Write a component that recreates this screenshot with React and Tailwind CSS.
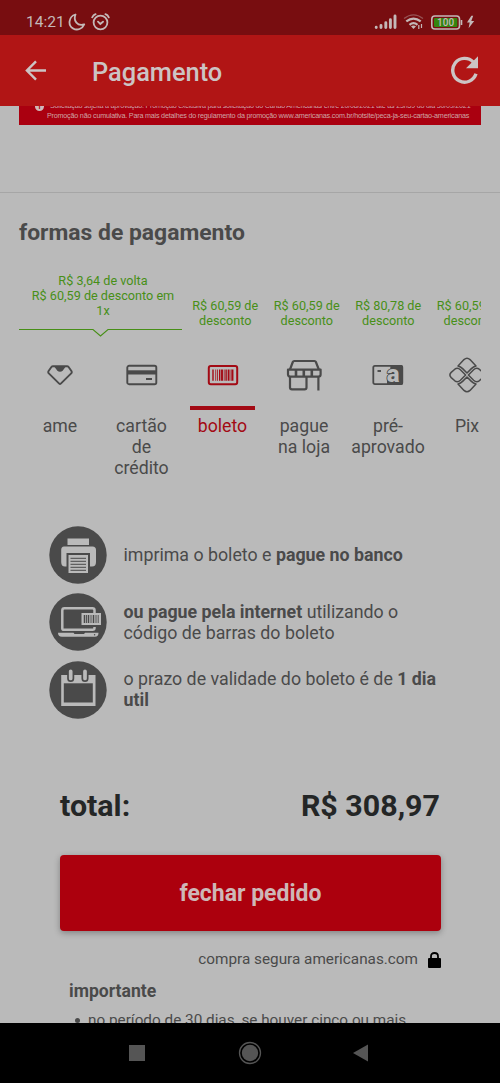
const discounts = ["R$ 60,59 de", "R$ 60,59 de", "R$ 80,78 de", "R$ 60,59 de"];

function AmeIcon() {
  return (
    <svg width="26" height="20" viewBox="0 0 26 20" fill="none" stroke="currentColor" strokeWidth="1.9" strokeLinejoin="round">
      <path d="M6 1.2H20Q21 1.2 21.6 2L24.4 6Q25.2 7.3 24.2 8.4L13.8 18.6Q13 19.3 12.2 18.6L1.8 8.4Q.8 7.3 1.6 6L4.4 2Q5 1.2 6 1.2Z" />
      <path d="M7 1.2H19L16 5.2Q13 8.4 10 5.2Z" fill="currentColor" stroke="none" />
    </svg>
  );
}

function CardIcon() {
  return (
    <svg width="32" height="22" viewBox="0 0 32 22" fill="none" stroke="currentColor" strokeWidth="1.9">
      <rect x="1.3" y="1.8" width="29" height="18.4" rx="1.8" />
      <path d="M1 8.4H30" strokeWidth="4.2" />
      <path d="M20 15H26" strokeWidth="2" />
    </svg>
  );
}

function BoletoIcon() {
  return (
    <svg width="32" height="22" viewBox="0 0 32 22" fill="none" stroke="currentColor">
      <rect x="1.8" y="1.9" width="28.4" height="18.4" rx="2" strokeWidth="2" />
      <path d="M6 5.5V16.8M12.7 5.5V16.8M19.1 5.5V16.8" strokeWidth="1.4" />
      <path d="M8.7 5.5V16.8M10.5 5.5V16.8M17.2 5.5V16.8M24 5.5V16.8" strokeWidth=".8" />
      <path d="M15 5.5V16.8M21.6 5.5V16.8M25.5 5.5V16.8" strokeWidth="1.9" />
    </svg>
  );
}

function StoreIcon() {
  return (
    <svg width="36" height="34" viewBox="0 0 36 34" fill="none" stroke="currentColor" strokeWidth="2.2" strokeLinejoin="round">
      <path d="M4 11.5L6.8 4Q7.2 3 8.2 3H28.5Q29.5 3 29.9 4L32.8 11.5" />
      <path d="M2 11.6H34.6V16.5Q34.6 18.6 32.2 18.6H4.4Q2 18.6 2 16.5Z" />
      <path d="M10 11.6V18.6M17.8 11.6V18.6M25.8 11.6V18.6" strokeWidth="2.6" />
      <path d="M4 18.6V29.5Q4 31.4 6 31.4H18.5Q20.5 31.4 20.5 29.5V18.6M32.4 18.6V32.4" />
    </svg>
  );
}

function PreIcon() {
  return (
    <svg width="32" height="22" viewBox="0 0 32 22">
      <rect x="1.3" y="1.8" width="29" height="18.4" rx="1.6" fill="none" stroke="currentColor" strokeWidth="1.8" />
      <path d="M18.5 1H29Q31 1 31 3V19Q31 21 29 21H15V12L18 9Z" fill="currentColor" />
      <text x="14.8" y="17.6" fontSize="24" fontWeight="900" fontFamily="Roboto" fill="#bababa" stroke="currentColor" strokeWidth="1.6" paintOrder="stroke">a</text>
      <path d="M5.5 7H9" stroke="currentColor" strokeWidth="1.9" />
    </svg>
  );
}

function PixIcon() {
  return (
    <svg width="38" height="38" viewBox="0 0 38 38" fill="none" stroke="currentColor" strokeWidth="1.5" strokeLinejoin="round">
      <path d="M10 10L16 3.6Q19 .8 22 3.6L28 10Q25.4 10.6 23.4 12.6L19 17L14.6 12.6Q12.6 10.6 10 10Z" />
      <path d="M10 28L16 34.4Q19 37.2 22 34.4L28 28Q25.4 27.4 23.4 25.4L19 21L14.6 25.4Q12.6 27.4 10 28Z" />
      <path d="M17.6 19L12.4 13.8Q9.6 11.2 6.8 13.2L3.2 16.4Q.6 19 3.2 21.6L6.8 24.8Q9.6 26.8 12.4 24.2ZM20.4 19L25.6 13.8Q28.4 11.2 31.2 13.2L34.8 16.4Q37.4 19 34.8 21.6L31.2 24.8Q28.4 26.8 25.6 24.2Z" />
    </svg>
  );
}

function Tab({ icon, label, active, className }) {
  return (
    <div className={`shrink-0 flex flex-col items-center text-center ${active ? "text-[#a30a14]" : ""} ${className}`}>
      <div className="h-[62px] flex items-center">{icon}</div>
      <div className={`w-[65px] h-[3.5px] ${active ? "bg-[#a30a14]" : ""}`} />
      <div className="mt-[6px] text-[17.7px] leading-[21px] whitespace-pre">{label}</div>
    </div>
  );
}

function PrinterIcon() {
  return (
    <svg className="shrink-0" width="58" height="58" viewBox="0 0 58 58">
      <circle cx="29" cy="29" r="28.7" fill="#4a4a4a" />
      <path d="M18.5 12.5H40V19H18.5ZM15 20.5H43.5Q47 20.5 47 24V36Q47 40.5 43 40.5H41V27H17.5V40.5H16Q12.2 40.5 12.2 36V24Q12.2 20.5 15 20.5Z" fill="#bababa" />
      <path d="M19.5 29H39V47H19.5Z" fill="#bababa" />
      <path d="M21.5 32.3H37M21.5 35.3H37M21.5 38.3H37M21.5 41.3H37M21.5 44.3H37" stroke="#4a4a4a" strokeWidth="1" />
    </svg>
  );
}

function LaptopIcon() {
  return (
    <svg className="shrink-0" width="58" height="58" viewBox="0 0 58 58">
      <circle cx="29" cy="29" r="28.7" fill="#4a4a4a" />
      <path d="M45.5 20V17Q45.5 15.3 43.5 15.3H15.5Q13.3 15.3 13.3 17.5V35.5Q13.3 36.8 15 36.8H43.5Q45.5 36.8 45.5 35V34" fill="none" stroke="#bababa" strokeWidth="2.5" />
      <path d="M32.5 20H52V32H32.5Z" fill="#bababa" />
      <path d="M35.5 22V30M39.5 22V30M44.5 22V30" stroke="#4a4a4a" strokeWidth="1.5" />
      <path d="M37.5 22V30M42 22V30M47 22V30M49.2 22V30" stroke="#4a4a4a" strokeWidth=".9" />
      <path d="M9 39.7H24.5L25.5 41H35L36 39.7H49.5Q49.5 43.7 46 43.7H13Q9 43.7 9 39.7Z" fill="#bababa" />
      <circle cx="45.6" cy="41.7" r=".7" fill="#4a4a4a" />
    </svg>
  );
}

function CalendarIcon() {
  return (
    <svg className="shrink-0" width="58" height="58" viewBox="0 0 58 58">
      <circle cx="29" cy="29" r="28.7" fill="#4a4a4a" />
      <path d="M12.2 14H46.5V45H12.2Z" fill="#bababa" />
      <path d="M14.8 22.3H43.8V41.5H14.8Z" fill="#4a4a4a" />
      <g fill="#bababa" stroke="#4a4a4a" strokeWidth="1.7">
        <rect x="19" y="7.6" width="5.4" height="12.5" rx="2.7" />
        <rect x="33.3" y="7.6" width="5.4" height="12.5" rx="2.7" />
      </g>
    </svg>
  );
}

function StatusBar() {
  return (
    <div className="h-[35px] shrink-0 bg-[#780d10] flex items-center pt-[9px] pl-[26px] pr-[25px] text-[#c4b8b8]">
      <span className="w-[38px] mt-px text-[15.5px] whitespace-nowrap">14:21</span>
      <svg className="ml-[4px]" width="18" height="18" viewBox="0 0 18 18" fill="none" stroke="currentColor" strokeWidth="1.8" strokeLinejoin="round">
        <path d="M7.5 1.5C.5 3.5-.4 12.3 5 15.4C9.3 18 14.4 15.7 16.2 11.3C9.5 13.4 5 8 7.5 1.5Z" />
      </svg>
      <svg className="ml-[5px]" width="20" height="18" viewBox="0 0 20 18" fill="none" stroke="currentColor" strokeWidth="1.8" strokeLinecap="round">
        <circle cx="9.5" cy="9.5" r="6.9" />
        <path d="M1.2 4.3Q2.4 2 4.6 1.2M14.4 1.2Q16.8 2 17.8 4.3M7 8.7L9.3 11L12 8.7" />
      </svg>
      <svg className="ml-auto" width="24" height="16" viewBox="0 0 24 16" stroke="currentColor" strokeWidth="2.9" strokeLinecap="round">
        <path d="M3.2 13.2V13.6M8 11.5V13.6M12.8 8.7V13.6M17.4 5.7V13.6M22 2V13.6" />
      </svg>
      <svg className="ml-[6px]" width="22" height="18" viewBox="0 0 22 18" fill="none" stroke="currentColor" strokeWidth="2.3">
        <path d="M1 5.5Q10.5-1.8 20 5.5" opacity=".4" strokeWidth="1.4" />
        <path d="M3.3 8.4Q10.5 2.8 17.7 8.4M6.5 11.8Q10.5 8.5 14.5 11.8" />
        <path d="M8 13.3Q10.5 11.7 13 13.3L10.5 16Z" fill="currentColor" stroke="none" />
        <path d="M15.8 12V16M18.5 11V15" strokeWidth="1.2" />
      </svg>
      <svg className="ml-[6px]" width="33" height="17" viewBox="0 0 33 17">
        <rect x="0.8" y="2" width="27.7" height="13" rx="3" fill="none" stroke="currentColor" strokeWidth="1.6" />
        <rect x="3" y="4" width="23.3" height="9" rx="1" fill="#348510" />
        <path d="M30.5 6V11" stroke="currentColor" strokeWidth="1.6" />
        <text x="14.6" y="12.2" textAnchor="middle" fontSize="10" fontWeight="500" fill="currentColor">100</text>
      </svg>
      <svg className="ml-[2px]" width="9" height="14" viewBox="0 0 9 14" fill="currentColor">
        <path d="M5.4.8L1 7.4H3.7L2.6 13.2L8.2 6H5.3L7.2.8Z" />
      </svg>
    </div>
  );
}

export default function App() {
  return (
    <div className="w-[500px] h-[1083px] overflow-hidden flex flex-col bg-[#bababa] text-[#4a4a4a] font-['Roboto',sans-serif]">
      <StatusBar />

      <header className="h-[71px] shrink-0 bg-[#b11515] flex items-center pl-[24px] pr-[21px] text-[#ccc4c4]">
        <svg width="24" height="22" viewBox="0 0 24 22" fill="none" stroke="currentColor" strokeWidth="2.4">
          <path d="M22 10.5H3.5M12 1.4L2.9 10.5L12 19.6" />
        </svg>
        <h1 className="ml-[44px] mt-[3px] text-[25.4px] font-medium whitespace-nowrap">Pagamento</h1>
        <svg className="ml-auto -mt-[2px]" width="29" height="30" viewBox="0 0 29 30" fill="none" stroke="currentColor" strokeWidth="3.4">
          <path d="M23.4 7.2A11.9 11.9 0 1 0 26 18.8" />
          <path d="M28 1.3V13.3H16Z" fill="currentColor" stroke="none" />
        </svg>
      </header>

      <main className="h-[917px] shrink-0 overflow-hidden">
        {/* end of the card promotion banner */}
        <div className="mx-[19px] h-[19px] overflow-hidden bg-[#aa0010] text-[#cfa5a5] font-['Liberation_Sans',sans-serif] text-[7.2px] tracking-[-0.21px] leading-[10px] whitespace-nowrap">
          <div className="-mt-[5px] pl-[16px] flex items-center">
            <span className="mr-[6px] size-[9px] shrink-0 rounded-full bg-[#cfb9b9] text-[#aa0010] font-bold leading-[9px] text-center">i</span>
            <span className="tracking-[-0.23px]">Solicitação sujeita a aprovação. Promoção exclusiva para solicitação do Cartão Americanas entre 20/08/2021 até às 23h59 do dia 30/09/2021</span>
          </div>
          <p className="pl-[28px]">Promoção não cumulativa. Para mais detalhes do regulamento da promoção www.americanas.com.br/hotsite/peca-ja-seu-cartao-americanas</p>
        </div>

        <div className="h-[68px] border-b border-[#a6a6a6]" />

        <h2 className="mt-[24px] ml-[19px] text-[22.9px] leading-[31px] font-bold">formas de pagamento</h2>

        <section className="mx-[19px] mt-[23px] overflow-hidden">
          <div className="h-[66px] flex text-[#478f17] text-[12.65px] leading-[15.3px] text-center">
            <div className="w-[163px] shrink-0 flex flex-col">
              <p className="pt-[1.5px] pl-[5px] whitespace-nowrap">R$ 3,64 de volta<br />R$ 60,59 de desconto em<br />1x</p>
              <svg className="mt-auto shrink-0" width="163" height="10" viewBox="0 0 163 10" fill="none" stroke="currentColor" strokeWidth="1.1">
                <path d="M0 2.5H74L81.5 9L89 2.5H163" />
              </svg>
            </div>
            {discounts.map((text, i) => (
              <p key={i} className={`w-[81.5px] shrink-0 pt-[27px] ${i === 0 ? "ml-[2.5px]" : ""}`}>{text}<br />desconto</p>
            ))}
          </div>

          <div className="mt-[7px] h-[136px] flex">
            <Tab className="w-[82px]" icon={<AmeIcon />} label="ame" />
            <Tab className="w-[81px]" icon={<CardIcon />} label={"cartão\nde\ncrédito"} />
            <Tab className="w-[81px]" icon={<BoletoIcon />} label="boleto" active />
            <Tab className="w-[82px]" icon={<StoreIcon />} label={"pague\nna loja"} />
            <Tab className="w-[86px]" icon={<PreIcon />} label={"pré-\naprovado"} />
            <Tab className="w-[72px]" icon={<PixIcon />} label="Pix" />
          </div>
        </section>

        <ul className="mt-[45.5px] pl-[49px] text-[17.8px] leading-[21px] whitespace-nowrap">
          <li className="h-[67.5px] flex gap-[16.5px]">
            <PrinterIcon />
            <p className="pt-[18px]">imprima o boleto e <b>pague no banco</b></p>
          </li>
          <li className="h-[67.5px] flex gap-[16.5px]">
            <LaptopIcon />
            <p className="pt-[7.5px]"><b>ou pague pela internet</b> utilizando o<br />código de barras do boleto</p>
          </li>
          <li className="h-[67.5px] flex gap-[16.5px]">
            <CalendarIcon />
            <p className="pt-[7px]">o prazo de validade do boleto é de <b>1 dia<br />util</b></p>
          </li>
        </ul>

        <div className="mt-[57px] mx-[60px] flex justify-between text-[#242626] text-[30.4px] leading-[42px] font-bold">
          <span>total:</span>
          <span>R$ 308,97</span>
        </div>

        <button className="block mt-[28px] mx-[60px] w-[381px] h-[76px] pt-[2px] rounded-[4px] bg-[#ac000d] text-[#ceb7b7] text-[23px] font-bold shadow-[0_2px_6px_rgba(0,0,0,0.3)]">
          fechar pedido
        </button>

        <div className="mt-[18px] pr-[59px] flex items-center justify-end text-[15.3px] leading-[21px]">
          compra segura americanas.com
          <svg className="ml-[10px] mt-px" width="13" height="16" viewBox="0 0 13 16" fill="#000">
            <path d="M1 6H12Q13 6 13 7V15Q13 16 12 16H1Q0 16 0 15V7Q0 6 1 6Z" />
            <path d="M3 7V4.3Q3 1 6.5 1T10 4.3V7" fill="none" stroke="#000" strokeWidth="1.8" />
          </svg>
        </div>

        <div className="mt-[11px] ml-[69px] text-[17.6px] leading-[21px] whitespace-nowrap">
          <h3 className="font-bold">importante</h3>
          <ul className="mt-[8px] text-[15.3px] flex items-center">
            <li className="ml-[6px] mr-[8px] size-[5px] rounded-full bg-[#4a4a4a]" />
            <li>no período de 30 dias, se houver cinco ou mais</li>
          </ul>
        </div>
      </main>

      <nav className="h-[60px] shrink-0 bg-black flex items-center text-[#555]">
        <div className="ml-[129px] size-[15.5px] bg-[#555]" />
        <svg className="ml-[93.5px]" width="24" height="24" viewBox="0 0 24 24">
          <circle cx="12" cy="12" r="10.5" fill="none" stroke="currentColor" strokeWidth="1.3" />
          <circle cx="12" cy="12" r="8.2" fill="currentColor" />
        </svg>
        <svg className="ml-[91px]" width="16" height="18" viewBox="0 0 16 18" fill="currentColor">
          <path d="M0 9L15 .5V17.5Z" />
        </svg>
      </nav>
    </div>
  );
}
